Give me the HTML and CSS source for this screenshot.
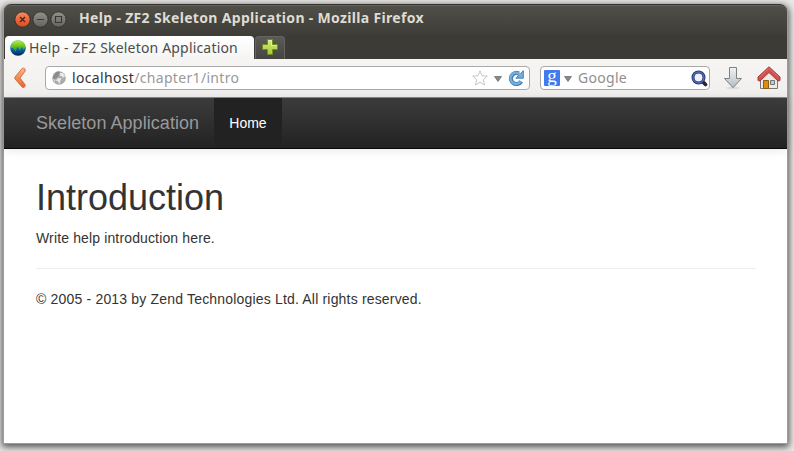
FILE: index.html
```html
<!DOCTYPE html>
<html lang="en">
<head>
<meta charset="utf-8">
<title>Help - ZF2 Skeleton Application</title>
<link rel="stylesheet" href="styles.css">
</head>
<body>
<div class="window">
  <header class="titlebar">
    <svg class="controls" width="54" height="18" viewBox="0 0 54 18">
      <defs>
        <linearGradient id="close" x2="0" y2="1"><stop stop-color="#f58a63"/><stop offset="1" stop-color="#dd4a1c"/></linearGradient>
        <linearGradient id="grey" x2="0" y2="1"><stop stop-color="#92908a"/><stop offset="1" stop-color="#65635c"/></linearGradient>
      </defs>
      <g stroke="#34332e">
        <circle cx="8.5" cy="9.5" r="7.7" fill="url(#close)"/>
        <circle cx="26.5" cy="9.5" r="7.7" fill="url(#grey)"/>
        <circle cx="44.5" cy="9.5" r="7.7" fill="url(#grey)"/>
      </g>
      <path d="M6 7l5 5M11 7l-5 5" stroke="#4a2216" stroke-width="1.3"/>
      <path d="M23 9.5h7M41.5 6.5h6v6h-6z" fill="none" stroke="#383730" stroke-width="1.1"/>
    </svg>
    <span class="window-title">Help - ZF2 Skeleton Application - Mozilla Firefox</span>
  </header>
  <div class="tabs">
    <div class="tab">
      <svg width="16" height="16" viewBox="0 0 16 16">
        <defs><linearGradient id="earth" x2="0" y2="1"><stop stop-color="#c4ec20"/><stop offset=".7" stop-color="#46ad2c"/><stop offset="1" stop-color="#147a5c"/></linearGradient>
        <linearGradient id="sea" x2="0" y2="1"><stop stop-color="#36c4d8"/><stop offset=".6" stop-color="#07669f"/><stop offset="1" stop-color="#04204c"/></linearGradient></defs>
        <circle cx="8" cy="8" r="7.8" fill="url(#sea)"/>
        <path d="M1 5C2.500 2 5 .6 8 .6S13.500 2 15 5l0 4-1-1-.5 2-1.500-3-1 1-1 3-1.500-3L7 7 6.500 9 5.500 12 4 9.500 3 8 1 8z" fill="url(#earth)"/>
      </svg>
      <span class="tab-label">Help - ZF2 Skeleton Application</span>
    </div>
    <div class="new-tab">
      <svg width="16" height="16" viewBox="0 0 16 16"><defs><linearGradient id="plus" x2="0" y2="1"><stop stop-color="#d9ed79"/><stop offset="1" stop-color="#a3c736"/></linearGradient></defs><path d="M5.5.5h5v5h5v5h-5v5h-5v-5h-5v-5h5z" fill="url(#plus)" stroke="#6f9020"/><path d="M6.5 1.5h3v5h5" fill="none" stroke="#eff8b4" stroke-opacity=".6"/></svg>
    </div>
  </div>
  <div class="toolbar">
    <svg class="back" width="14" height="22" viewBox="0 0 14 22"><defs><linearGradient id="arrow" x2="0" y2="1"><stop stop-color="#f9b987"/><stop offset="1" stop-color="#e8602c"/></linearGradient></defs><path d="M8.300 1.300Q11.500 .500 11.200 4L6 11 11.200 17.800q.3 3-2.700 2.700L.800 11.700V10.300z" fill="url(#arrow)" stroke="#d36a36" stroke-width=".9"/></svg>
    <div class="field address">
      <svg class="globe" width="14" height="14" viewBox="0 0 14 14"><circle cx="7" cy="7" r="6.8" fill="#ababab"/><path d="M4 1l3-.8 1 2-2 1 1 1.500-3 2.500-3 1 .3-3z" fill="#8b8b8b"/><path d="M8 2l3 0 2.500 4-1.500-.5-1 1.500-1.500-2-1.500 0zM6.500 7l3 .500-1 2-1 3.500-2-3-2-.5zM.8 8l2.200 1v2z" fill="#e9e9e9"/></svg>
      <span class="url"><b class="host">localhost</b>/chapter1/intro</span>
      <svg class="star" width="16" height="16" viewBox="0 0 16 16"><path d="M8 .7l2 5 5.4.4-4.2 3.5 1.4 5.4L8 12.1 3.4 15l1.4-5.4L.6 6.1 6 5.7z" fill="#fff" stroke="#c6c6c6"/></svg>
      <svg class="drop" width="8" height="6" viewBox="0 0 8 6"><path d="M.5.5h7L4 5.5z" fill="#888" stroke="#666" stroke-width=".7"/></svg>
      <svg class="reload" width="16" height="16" viewBox="0 0 16 16"><path d="M13.200 11.300A5.500 5.500 0 1 1 10.800 3.500" fill="none" stroke="#4384b8" stroke-width="4.2"/><path d="M15.300.7v7.500H7.800z" fill="#77afdc" stroke="#4384b8"/><path d="M12.700 11.300A5.500 5.500 0 1 1 10.800 3.500l2 2" fill="none" stroke="#77afdc" stroke-width="2.4"/></svg>
    </div>
    <div class="field search">
      <div class="engine">g</div>
      <svg class="engine-drop" width="8" height="6" viewBox="0 0 8 6"><path d="M.5.5h7L4 5.5z" fill="#888" stroke="#666" stroke-width=".7"/></svg>
      <span class="placeholder">Google</span>
      <svg width="17" height="17" viewBox="0 0 17 17"><path d="M12 12l2.500 2.500" stroke="#272727" stroke-width="3.600" stroke-linecap="round"/><circle cx="7.500" cy="7.500" r="5.500" fill="#eef0f8" stroke="#202e6c" stroke-width="3"/><circle cx="7.500" cy="7.500" r="5.5" fill="none" stroke="#5470c0" stroke-width="1.3"/></svg>
    </div>
    <svg class="download" width="20" height="24" viewBox="0 0 20 24"><defs><linearGradient id="down" x2="0" y2="1"><stop stop-color="#f1f3f3"/><stop offset="1" stop-color="#b5bdc2"/></linearGradient></defs><ellipse cx="10" cy="22" rx="7" ry="1.5" fill="#ddd"/><path d="M6.5 1.5h7v11h5L10 21.7 1.5 12.5h5z" fill="url(#down)" stroke="#7d8283"/></svg>
    <svg class="home" width="24" height="24" viewBox="0 0 24 24"><path d="M3.500 11L12 4l8.500 7v11.500h-17z" fill="#ecebe7" stroke="#777"/><path d="M6.500 14.500h5v8h-5z" fill="#d98c16" stroke="#915b09"/><path d="M13.500 14.500h4v4h-4z" fill="#b8cdd3" stroke="#6b7778"/><path d="M1 11v3.500l2 .500 9-8.500 9 8.500 2-.500v-3.500L12 .800z" fill="#d0504d" stroke="#a93b3b"/><path d="M2.500 11.200L12 2.300 21.500 11.200" fill="none" stroke="#e07872" stroke-width=".8"/></svg>
  </div>
  <nav class="navbar">
    <a class="brand">Skeleton Application</a>
    <a class="nav-item">Home</a>
  </nav>
  <main class="content">
    <h1>Introduction</h1>
    <p>Write help introduction here.</p>
    <hr>
    <footer>© 2005 - 2013 by Zend Technologies Ltd. All rights reserved.</footer>
  </main>
</div>
</body>
</html>
```
FILE: styles.css
```css
* { box-sizing: border-box; }
html { background: #e9e8e7; }
body { margin: 0; padding: 4px 6px 7px 3px; height: 451px; overflow: hidden; font-family: "Liberation Sans", Arial, sans-serif; }
svg { display: block; flex: none; }
.window { height: 440px; display: flex; flex-direction: column; border: 1px solid #9c9b98; border-top: 0; border-radius: 7px 7px 0 0; background: #fff; box-shadow: 0 2px 7px 1px rgba(0, 0, 0, .65); }
.titlebar { height: 32px; display: flex; align-items: flex-start; padding: 5px 0 0 10px; border-top: 1px solid #35342f; border-radius: 7px 7px 0 0; background: linear-gradient(#504f48, #3d3c37); box-shadow: inset 0 1px #64635b; }
.window-title { margin: -1px 0 0 11px; font: bold 14px/18px "Noto Sans", sans-serif; color: #dfdbd2; white-space: nowrap; letter-spacing: .33px; }
.tabs { height: 23px; display: flex; background: #3c3b37; gap: 1px; }
.tab { width: 249px; margin-left: 1px; display: flex; align-items: center; gap: 3px; padding-left: 5px; background: linear-gradient(#fff, #f5f4f3); border-radius: 4px 4px 0 0; }
.tab-label { font: 14px/20px "Noto Sans", sans-serif; letter-spacing: .18px; color: #4c4c4c; white-space: nowrap; }
.new-tab { width: 30px; display: flex; justify-content: center; align-items: flex-start; padding-top: 2px; border: 1px solid #65645e; border-bottom: 0; border-radius: 4px 4px 0 0; background: linear-gradient(#5b5a55, #454440); }
.toolbar { height: 39px; flex: none; display: flex; align-items: flex-start; padding: 7px 6px 0 10px; background: linear-gradient(#f6f5f4, #f0efed); border-bottom: 1px solid #8a8985; }
.back { margin-top: 1px; }
.field { height: 24px; display: flex; align-items: center; background: #fff; border: 1px solid #aaa9a5; border-radius: 4px; }
.address { width: 485px; margin-left: 17px; padding: 0 5px 0 6px; }
.url { flex: 1; margin-left: 6px; font: 14px/22px "Noto Sans", sans-serif; letter-spacing: .33px; color: #999; white-space: nowrap; }
.host { font-weight: 400; color: #333; }
.drop { margin: 2px 6px 0 6px; }
.search { width: 170px; margin-left: 10px; padding: 0 1px 0 3px; }
.engine { width: 16px; height: 16px; border-radius: 1px; background: #427af0; color: #fff; font: 19px/12px "Liberation Serif", serif; text-align: center; }
.engine-drop { margin: 2px 6px 0 4px; }
.placeholder { flex: 1; font: 14px/22px "Noto Sans", sans-serif; letter-spacing: .3px; color: #8f8f8f; }
.download { margin-left: 13px; }
.home { margin-left: 14px; }
.navbar { height: 51px; flex: none; display: flex; border-bottom: 1px solid #080808; background: linear-gradient(#3c3c3c, #222); box-shadow: 0 1px 10px rgba(0, 0, 0, .1); line-height: 50px; }
.brand { width: 210px; padding-left: 32px; font-size: 18px; letter-spacing: .05px; color: #999; white-space: nowrap; }
.nav-item { width: 68px; text-align: center; font-size: 14px; color: #fff; background: #222; }
.content { padding: 29px 31px 0 32px; font-size: 14px; line-height: 20px; color: #333; }
h1 { margin: 0 0 10px; font-size: 36px; line-height: 40px; font-weight: 400; }
p { margin: 0; letter-spacing: .14px; }
footer { letter-spacing: .18px; }
hr { margin: 20px 0; border: 0; border-top: 1px solid #eee; }
```
